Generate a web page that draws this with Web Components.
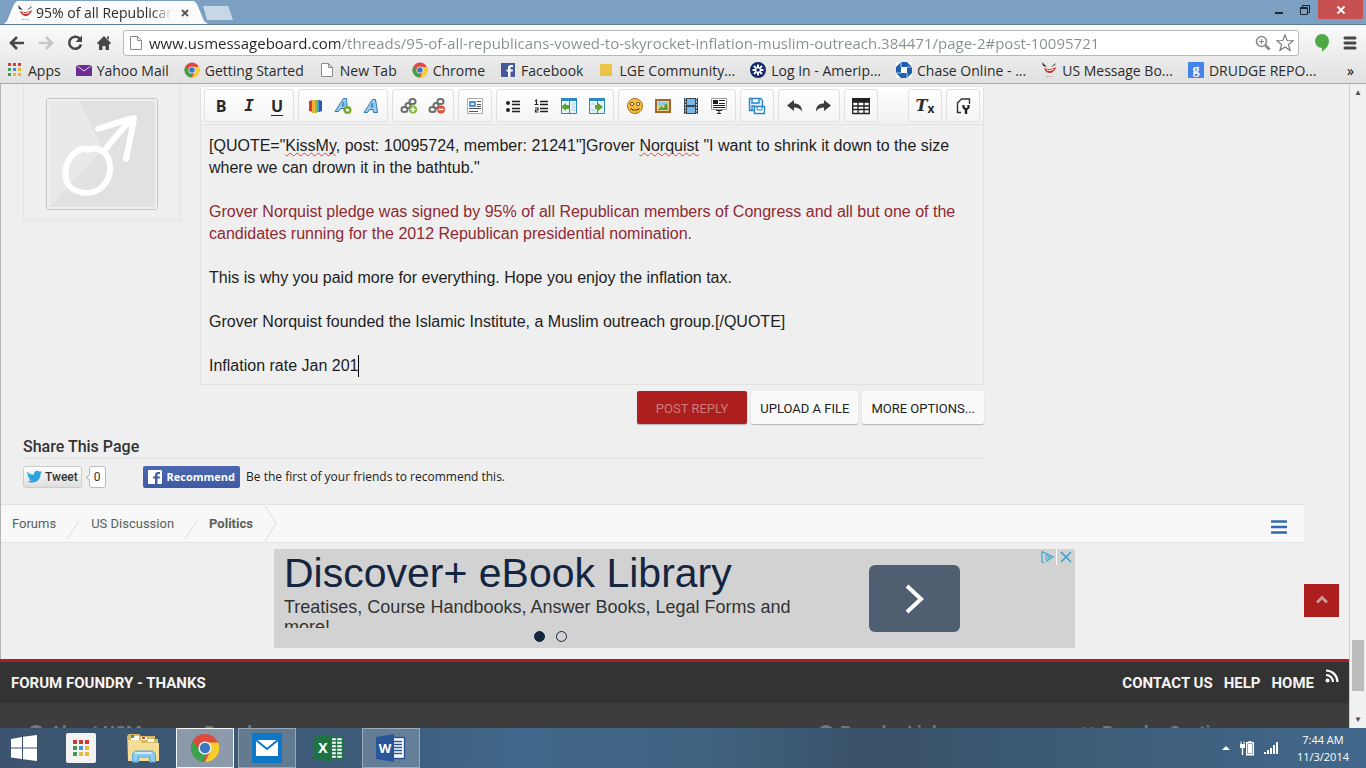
<!DOCTYPE html>
<html lang="en">
<head>
<meta charset="utf-8">
<title>95% of all Republicans vowed to skyrocket inflation</title>
<style>
    html, body {
        height: 100%;
        margin: 0;
    }

    body {
        display: flex;
        flex-direction: column;
        font-family: "Liberation Sans", Arial, sans-serif;
        overflow: hidden;
    }
</style>
</head>
<body>
<browser-chrome>
    <browser-tab slot="tab">95% of all Republicans</browser-tab>
    <book-mark icon="apps">Apps</book-mark>
    <book-mark icon="envelope">Yahoo Mail</book-mark>
    <book-mark icon="chrome">Getting Started</book-mark>
    <book-mark icon="page">New Tab</book-mark>
    <book-mark icon="chrome">Chrome</book-mark>
    <book-mark icon="facebook">Facebook</book-mark>
    <book-mark icon="folder">LGE Community...</book-mark>
    <book-mark icon="ameriprise">Log In - Amerip...</book-mark>
    <book-mark icon="chase">Chase Online - ...</book-mark>
    <book-mark icon="usmb">US Message Bo...</book-mark>
    <book-mark icon="google">DRUDGE REPO...</book-mark>
</browser-chrome>
<page-view>
    <reply-area>
        <user-avatar slot="avatar"></user-avatar>
        <post-editor slot="editor">
            <p>[QUOTE="<u>KissMy</u>, post: 10095724, member: 21241"]Grover <u>Norquist</u> <span>"I want to shrink it down to the size</span> <span>where we can drown it in the bathtub."</span></p>
            <p class="red">Grover Norquist pledge was signed by 95% of all Republican members of Congress and all but one of the candidates running for the 2012 Republican presidential nomination.</p>
            <p>This is why you paid more for everything. Hope you enjoy the inflation tax.</p>
            <p>Grover Norquist founded the Islamic Institute, a Muslim outreach group.[/QUOTE]</p>
            <p class="caret">Inflation rate Jan 201</p>
        </post-editor>
        <share-bar slot="share"></share-bar>
    </reply-area>
    <bread-crumbs></bread-crumbs>
    <text-ad>
        <span slot="title">Discover+ eBook Library</span>
        <span slot="text">Treatises, Course Handbooks, Answer Books, Legal Forms and more!</span>
    </text-ad>
    <page-footer></page-footer>
</page-view>
<task-bar></task-bar>

<script>
// Markup for every small icon, keyed by name.
const ICONS = {
    apps: `<svg viewBox="0 0 16 16">
        <path fill="#d0403a" d="M1 1h3v3H1zM6 1h3v3H6zM11 1h3v3h-3z"/>
        <path fill="#3f9b58" d="M1 6h3v3H1z"/><path fill="#4a86d8" d="M6 6h3v3H6z"/><path fill="#e5b43c" d="M11 6h3v3h-3zM6 11h3v3H6zM11 11h3v3h-3z"/>
        <path fill="#3f9b58" d="M1 11h3v3H1z"/></svg>`,
    envelope: `<svg viewBox="0 0 16 16"><path fill="#6b2c93" d="M0 3h16v11H0z"/><path fill="none" stroke="#e6d5ef" d="M0 3l8 6 8-6"/></svg>`,
    chrome: `<svg viewBox="0 0 32 32">
        <circle cx="16" cy="16" r="15" fill="#dd4b3e"/>
        <path fill="#f6cf2f" d="M16 10h14a15 15 0 0 1-14 21l6-12z"/>
        <path fill="#3da24d" d="M3 8.500l8 11 6 3-3 8.400A15 15 0 0 1 3 8.500z"/>
        <circle cx="16" cy="16" r="7" fill="#f3f3f3"/><circle cx="16" cy="16" r="5.500" fill="#3a78c3"/></svg>`,
    page: `<svg viewBox="0 0 16 16"><path fill="#fdfdfd" stroke="#8a8a8a" d="M2.500 1.500h7l4 4v9h-11zM9.500 1.500v4h4"/></svg>`,
    facebook: `<svg viewBox="0 0 16 16"><path fill="#43599b" d="M1 1h14v14H1z"/><path fill="#fff" d="M8 15V9.500H6.500v-2H8V6c0-2 1.200-3 3-3h2v2h-1.300C11 5 10.500 5.300 10.500 6v1.500H13l-.3 2h-2.200V15z"/></svg>`,
    folder: `<svg viewBox="0 0 16 16"><path fill="#eac545" d="M2 2h12v12H2z"/></svg>`,
    ameriprise: `<svg viewBox="0 0 16 16"><circle cx="8" cy="8" r="8" fill="#14296b"/>
        <path stroke="#fff" stroke-width="2" d="M8 2.500v11M2.500 8h11M4 4l8 8M12 4l-8 8"/><circle cx="8" cy="8" r="1.800" fill="#14296b"/></svg>`,
    chase: `<svg viewBox="0 0 16 16"><path fill="#fff" d="M0 0h16v16H0z"/><path fill="#1c60ae" fill-rule="evenodd" d="M5 0h6l5 5v6l-5 5H5l-5-5V5zM5 5v6h6V5z"/><path stroke="#fff" stroke-width=".700" d="M5 0v5M16 5h-5M11 16v-5M0 11h5"/></svg>`,
    usmb: `<svg viewBox="0 0 16 16"><path fill="#333" d="M1 0l3 3 2 2-4-1zM15 1l-4 3-1 1 4-2z"/><path fill="#c33b32" d="M3 6c4 1.500 7 1.500 12-1-1 4-4 6-6 6s-5-1-6-5z"/>
        <path fill="#fff" d="M5 7c3 1.500 5 1 8-.500l-1 1.500c-2 1-4 1-6 .500z"/><path stroke="#b9a9a2" stroke-dasharray="2 1" d="M5 14.500h7"/></svg>`,
    google: `<svg viewBox="0 0 16 16"><rect width="16" height="16" rx="1" fill="#4583ea"/><text x="8" y="12" fill="#fff" font-family="Liberation Serif, serif" font-weight="bold" font-size="14" text-anchor="middle">g</text></svg>`,
    back: `<svg viewBox="0 0 16 16"><path fill="none" stroke="#474747" stroke-width="2.600" d="M15 8H2M8 2L2 8l6 6"/></svg>`,
    forward: `<svg viewBox="0 0 16 16"><path fill="none" stroke="#c6c6c6" stroke-width="2.600" d="M1 8h13M8 2l6 6-6 6"/></svg>`,
    reload: `<svg viewBox="0 0 16 16"><path fill="none" stroke="#474747" stroke-width="2.600" d="M12.500 3.500a6 6 0 1 0 1.500 6"/><path fill="#474747" d="M15 .500v6.500H8.500z"/></svg>`,
    home: `<svg viewBox="0 0 16 16"><path fill="#474747" d="M8 1l7 7-1 1.500-1-1V15h-3.500v-4h-3v4H3V8.500l-1 1L1 8zM11 1.500h2V5l-2-2z"/></svg>`,
    zoom: `<svg viewBox="0 0 16 16"><circle cx="6.500" cy="6.500" r="5" fill="none" stroke="#8a8a8a" stroke-width="1.600"/><path stroke="#8a8a8a" d="M4 6.500h5M6.500 4v5"/><path stroke="#8a8a8a" stroke-width="3" d="M10.500 10.500l4 4"/></svg>`,
    star: `<svg viewBox="0 0 16 16"><path fill="#fff" stroke="#777" d="M8 .800l1.900 5 5.400.200-4.300 3.300 1.500 5.200L8 11.500l-4.500 3 1.500-5.200L.700 6l5.400-.200z"/></svg>`,
    hangouts: `<svg viewBox="0 0 16 18"><path fill="#4fa846" d="M8 0a7 7 0 0 1 7 7c0 5-4 8-7 11v-4A7 7 0 0 1 8 0z"/></svg>`,
    menu: `<svg viewBox="0 0 14 14"><path stroke="#474747" stroke-width="3" stroke-linecap="round" d="M2 2h10M2 7h10M2 12h10"/></svg>`,
    minimize: `<svg viewBox="0 0 12 12"><path stroke="#1b2630" stroke-width="2" d="M2 9h8"/></svg>`,
    restore: `<svg viewBox="0 0 12 12"><path fill="none" stroke="#1b2630" d="M1.500 3.500h7v7h-7zM1.500 4.500h7M3.500 3V1.500h7v7H9"/></svg>`,
    close: `<svg viewBox="0 0 12 12"><path stroke="#fff" stroke-width="1.800" d="M2.500 2.500l7 7M9.500 2.500l-7 7"/></svg>`,
    tabclose: `<svg viewBox="0 0 12 12"><path stroke="#555" stroke-width="1.800" d="M3 3l6 6M9 3L3 9"/></svg>`,

    // Editor toolbar
    color: `<svg viewBox="0 0 18 18"><path fill="#d53a2e" d="M3 4l4-1v12l-4-1z"/><path fill="#efb136" d="M6 3h3v13H6z"/><path fill="#8bc34a" d="M9 3h2v13H9z"/><path fill="#4a9fdd" d="M11 3h2v12h-2z"/><path fill="#3257a8" d="M13 3l3 1v10l-3 1z"/></svg>`,
    fontsize: `<svg viewBox="0 0 18 18"><path fill="#9cd0f2" stroke="#2f75b8" d="M1 14.500L9.500 1.500h3l1 13h-3l-.500-3H6.500l-2 3zM8 9h2l-.300-4z"/><circle cx="13.500" cy="13" r="2.800" fill="#fff" stroke="#7aab2c" stroke-width="2.400"/></svg>`,
    fontface: `<svg viewBox="0 0 18 18"><path fill="#9cd0f2" stroke="#2f75b8" d="M2 15.500L10.500 2.500h3l2 13h-4l-.500-3H7.500l-2 3zM9 10h2l-.500-4z"/></svg>`,
    link: `<svg viewBox="0 0 18 18"><g fill="none" stroke="#6f6f6f" stroke-width="2"><rect x="1.500" y="10" width="6" height="5" rx="2.500"/><rect x="5.500" y="6" width="5" height="5" rx="2.500"/><rect x="9.500" y="2" width="6" height="5" rx="2.500"/></g><circle cx="13" cy="12.500" r="4" fill="#7db338"/><path stroke="#fff" stroke-width="1.600" d="M10.500 12.500h5M13 10v5"/></svg>`,
    unlink: `<svg viewBox="0 0 18 18"><g fill="none" stroke="#6f6f6f" stroke-width="2"><rect x="1.500" y="10" width="6" height="5" rx="2.500"/><rect x="5.500" y="6" width="5" height="5" rx="2.500"/><rect x="9.500" y="2" width="6" height="5" rx="2.500"/></g><circle cx="13" cy="12.500" r="4" fill="#dc5138"/><path stroke="#fff" stroke-width="1.600" d="M10.500 12.500h5"/></svg>`,
    align: `<svg viewBox="0 0 18 18"><path fill="#fff" stroke="#a9a9a9" d="M1.500 1.500h15v15h-15z"/><path fill="#d8ebfa" stroke="#2b6fb5" stroke-width="1.400" d="M4 5h5v4H4z"/><path stroke="#555" d="M11 4.500h4M11 7.500h4M11 9.500h4M3 11.500h12M3 14.500h9"/></svg>`,
    bullets: `<svg viewBox="0 0 18 18"><circle cx="4" cy="6" r="2" fill="#222"/><circle cx="4" cy="13" r="2" fill="#222"/><path stroke="#222" stroke-width="1.400" d="M8 4.500h8M8 7.500h8M8 11.500h8M8 14.500h8"/></svg>`,
    numbers: `<svg viewBox="0 0 18 18"><path fill="none" stroke="#222" stroke-width="1.200" d="M3 4l1.500-1v4.500M2.500 7.500h4M3 11h3v2H3.500v2h3"/><path stroke="#222" stroke-width="1.400" d="M8 4.500h8M8 7.500h8M8 11.500h8M8 14.500h8"/></svg>`,
    outdent: `<svg viewBox="0 0 18 18"><path fill="#e8f4fb" stroke="#2b8ac4" d="M1.500 1.500h15v15h-15z"/><path fill="#2b8ac4" d="M1 1h16v3H1zM9 4h1v12H9z"/><path fill="#5fa22e" d="M1 10l5-4v2h3v4H6v2z"/><path stroke="#9cc8e4" d="M11.500 7h4M11.500 10h4M11.500 13h4"/></svg>`,
    indent: `<svg viewBox="0 0 18 18"><path fill="#e8f4fb" stroke="#2b8ac4" d="M1.500 1.500h15v15h-15z"/><path fill="#2b8ac4" d="M1 1h16v3H1zM9 4h1v12H9z"/><path fill="#5fa22e" d="M15 10l-5-4v2H7v4h3v2z"/><path stroke="#9cc8e4" d="M3 7h4M3 13h4"/></svg>`,
    smiley: `<svg viewBox="0 0 18 18"><circle cx="9" cy="9" r="7.500" fill="#f6bd3a" stroke="#a8701a"/><circle cx="6" cy="7" r="1.600" fill="#fff" stroke="#6b430c"/><circle cx="12" cy="7" r="1.600" fill="#fff" stroke="#6b430c"/><path fill="none" stroke="#7a4b0d" stroke-width="1.200" d="M4.500 11.500q4.500 3.500 9 0"/></svg>`,
    image: `<svg viewBox="0 0 18 18"><path fill="#e6d68d" stroke="#a5652a" stroke-width="2" d="M2 3h14v12H2z"/><path fill="#8ccbe8" d="M4 5h10v4H4z"/><path fill="#5b9e3a" d="M4 13l3-4 3 2 1-4h2l1 6z"/></svg>`,
    media: `<svg viewBox="0 0 18 18"><path fill="#3d4750" d="M2 1h14v16H2z"/><path fill="#77b7ea" d="M5 2h8v6H5zM5 10h8v6H5z"/><path stroke="#dfe6ea" stroke-dasharray="1.500 1.500" d="M3.500 1v16M14.500 1v16"/></svg>`,
    insert: `<svg viewBox="0 0 18 18"><path fill="#fff" stroke="#999" d="M1.500 1.500h15v11h-15z"/><path fill="#222" d="M3 3h5v4H3z"/><path stroke="#222" d="M9 3.500h6M9 6.500h6M3 8.500h12M3 10.500h12M6 13.500h6M9 13v4M7 16.500h4"/></svg>`,
    drafts: `<svg viewBox="0 0 18 18"><path fill="#dff0fb" stroke="#2b86c6" stroke-width="1.400" d="M1.500 1.500h11l2 2v10h-13zM4 2v4h7V2M4 13V9h3"/><path fill="#fff" stroke="#2b86c6" stroke-width="1.400" d="M6.500 9.500h10v7h-10z"/><path fill="none" stroke="#2b86c6" d="M9 10v3h5v-3"/></svg>`,
    undo: `<svg viewBox="0 0 18 18"><path fill="#3c3c3c" d="M1 8.500L8 3v3.500c5 0 8 2.500 8 8-2-3-4-4-8-4V14z"/></svg>`,
    redo: `<svg viewBox="0 0 18 18"><path fill="#3c3c3c" d="M17 8.500L10 3v3.500c-5 0-8 2.500-8 8 2-3 4-4 8-4V14z"/></svg>`,
    table: `<svg viewBox="0 0 18 18"><path fill="#222" d="M0 1h18v4H0z"/><path fill="#fff" stroke="#222" stroke-width="1.300" d="M.700 5h16.600v11.500H.700zM.700 9h16.600M.700 12.500h16.600M6 5v11M12 5v11"/></svg>`,
    source: `<svg viewBox="0 0 18 18"><path fill="none" stroke="#333" stroke-width="1.400" d="M7 15.500H3.500V6l4-4h8v5"/><path fill="none" stroke="#222" stroke-width="2.200" d="M9.500 8v2.500l2.500 2 2.500-2V8"/><path stroke="#222" stroke-width="2.400" d="M12 12v5"/></svg>`,

    // Page
    bars: `<svg viewBox="0 0 16 14"><path stroke="#3169ac" stroke-width="2.600" stroke-linecap="round" d="M1 1.500h14M1 7h14M1 12.500h14"/></svg>`,
    bird: `<svg viewBox="0 0 16 14"><path fill="#27a5dd" d="M0 2c2 2.200 4.500 3 7.500 3.200C7 3 8.500.800 11 .800c1 0 1.800.400 2.400 1L15.500 1l-1 1.800L16 2.500l-1.500 1.800C14.500 9.500 11 13.500 5.500 13.500 3.500 13.500 1.500 13 .500 12c1.800.200 3-.300 4.200-1.200-1.500 0-2.600-1-3-2.200h1.400C1.500 8 .600 6.700.600 5.300l1.400.400C.600 4.700-.300 3.500 0 2z"/></svg>`,
    fbwhite: `<svg viewBox="0 0 14 14"><rect width="14" height="14" rx="1" fill="#fff"/><path fill="#4460a8" d="M7 14V8.500H5v-2h2V5c0-2 1.200-3 3-3h2v2h-1.300C10 4 9.500 4.300 9.500 5v1.500H12l-.300 2H9.500V14z"/></svg>`,
    up: `<svg viewBox="0 0 14 14"><path fill="none" stroke="#c99a9a" stroke-width="2.800" d="M2 8.500l5-5 5 5"/></svg>`,
    next: `<svg viewBox="0 0 20 30"><path fill="none" stroke="#fff" stroke-width="4" d="M2 2l14 13L2 28"/></svg>`,
    adchoices: `<svg viewBox="0 0 14 14"><path fill="none" stroke="#35a5cf" stroke-width="1.200" d="M4 12.500l-2-.500V1.500L13 7l-7 4.500"/><path fill="none" stroke="#35a5cf" d="M6 10V5l4 2-3 1.500"/></svg>`,
    adclose: `<svg viewBox="0 0 14 14"><path stroke="#35a5cf" stroke-width="1.600" d="M2 2l10 10M12 2L2 12"/></svg>`,
    rss: `<svg viewBox="0 0 14 14"><circle cx="2.500" cy="11.500" r="2" fill="#fff"/><path fill="none" stroke="#fff" stroke-width="2.200" d="M1 6a7 7 0 0 1 7 7M1 1.500A11.500 11.500 0 0 1 12.500 13"/></svg>`,
    info: `<svg viewBox="0 0 14 14"><circle cx="7" cy="7" r="7" fill="#777"/><path fill="#3d3d3d" d="M5 4h4v3H5z"/></svg>`,
    heart: `<svg viewBox="0 0 18 14"><path fill="#777" d="M9 14L1 6C-1 2 3-2 9 3c6-5 10-1 8 3z"/></svg>`,

    // Task bar
    windows: `<svg viewBox="0 0 26 26"><path fill="#fff" d="M0 4l11-2v10.500H0zM12 1.800L26 0v12.500H12zM0 13.500h11V24L0 22.500zM12 13.500h14V26l-14-1.800z"/></svg>`,
    launcher: `<svg viewBox="0 0 30 30"><rect width="30" height="30" rx="2" fill="#f3f3f3"/><path fill="#cf3a35" d="M7 7h4v4H7zM13 7h4v4h-4zM19 7h4v4h-4z"/><path fill="#3f9b58" d="M7 13h4v4H7zM7 19h4v4H7z"/><path fill="#4a8fd8" d="M13 13h4v4h-4z"/><path fill="#e8b93c" d="M19 13h4v4h-4zM13 19h4v4h-4zM19 19h4v4h-4z"/></svg>`,
    explorer: `<svg viewBox="0 0 32 30"><path fill="#d9b962" d="M0 3l2-2h10l2 2h14v3h3v22H1z"/><path fill="#fff" d="M4 3h8v4H4zM14 4h6v3h-6zM21 6h6v3h-6z"/><path fill="#3f9b58" d="M4 2h3v3H4z"/><path fill="#d5463a" d="M15 4h3v2h-3z"/><path fill="#f4dd94" d="M1 7h12l2 3h17v18H1z"/>
        <path fill="#8ccbf0" stroke="#5aa5d6" d="M5.500 29v-8l3-3h17l3 3v8h-6v-5h-11v5z"/><path fill="#cfeafa" d="M8 19h17v2H8z"/></svg>`,
    mail: `<svg viewBox="0 0 30 30"><path fill="#0d78c8" d="M0 0h30v30H0z"/><path fill="#fff" d="M4 7h22v16H4z"/><path fill="none" stroke="#0d78c8" stroke-width="2" d="M4 7l11 9 11-9"/></svg>`,
    excel: `<svg viewBox="0 0 30 28"><path fill="#fff" stroke="#1f7244" stroke-width="1.400" d="M16 3.500h12.500v21H16z"/><path stroke="#1f7244" stroke-width="1.400" d="M17 7h11M17 10.500h11M17 14h11M17 17.500h11M17 21h11M22.500 4v20"/><path fill="#1f7244" d="M0 3l18-3v28L0 25z"/><text x="9" y="19" fill="#fff" font-family="Open Sans, sans-serif" font-weight="bold" font-size="14" text-anchor="middle">X</text></svg>`,
    word: `<svg viewBox="0 0 30 28"><path fill="#fff" stroke="#2a5699" stroke-width="1.400" d="M16 3.500h12.500v21H16z"/><path stroke="#2a5699" stroke-width="1.400" d="M18 7.500h8M18 10.500h8M18 13.500h8M18 16.500h8M18 19.500h8"/><path fill="#2a5699" d="M0 3l18-3v28L0 25z"/><text x="9" y="19" fill="#fff" font-family="Open Sans, sans-serif" font-weight="bold" font-size="13" text-anchor="middle">W</text></svg>`,
    trayup: `<svg viewBox="0 0 8 8"><path fill="#fff" d="M0 6l4-4 4 4z"/></svg>`,
    battery: `<svg viewBox="0 0 16 16"><path fill="none" stroke="#fff" stroke-width="1.400" d="M7.700 2.700h6.600v12H7.700z"/><path fill="#fff" d="M9 4h4v9.500H9zM9.500 1h3v1h-3zM1 4h5v4H4.200v7H2.800V8H1zM1.500 1.500h1V4h-1zM4.500 1.500h1V4h-1z"/></svg>`,
    signal: `<svg viewBox="0 0 16 14"><path fill="#fff" d="M0 11h2v2H0zM3 9h2v4H3zM6 7h2v6H6zM9 4h2v9H9zM12 1h2v12h-2z"/></svg>`
};

class UiIcon extends HTMLElement {
    constructor() {
        super();
        this.root = this.attachShadow({ mode: 'open' });
    }

    connectedCallback() {
        this.root.innerHTML = `
<style>
    :host {
        display: inline-block;
        flex: none;
        height: var(--icon-h, 16px);
        width: var(--icon-w, 16px);
    }

    svg {
        display: block;
        height: 100%;
        width: 100%;
    }
</style>
${ICONS[this.getAttribute("name")]}`;
        this.root.querySelector("svg").setAttribute("aria-hidden", "true");
    }
}

customElements.define('ui-icon', UiIcon);

class BrowserTab extends HTMLElement {
    constructor() {
        super();
        let template = document.createElement("template");
        template.innerHTML = `
<style>
    :host {
        align-items: center;
        background-color: #fbfbfb;
        box-sizing: border-box;
        clip-path: polygon(0 100%, 3px 20px, 10px 3px, 13px 0, 190px 0, 193px 3px, 200px 20px, 204px 100%);
        color: #2a2a2a;
        display: flex;
        font-size: 14px;
        gap: 3px;
        height: 23px;
        padding: 0 17px 0 13px;
        width: 204px;
    }

    .title {
        flex: 1;
        -webkit-mask-image: linear-gradient(to right, #000 85%, transparent);
        overflow: hidden;
        white-space: nowrap;
    }

    button {
        background: none;
        border: none;
        display: flex;
        --icon-h: 12px;
        --icon-w: 12px;
        padding: 0 0 0 4px;
    }
</style>
<ui-icon name="usmb"></ui-icon>
<span class="title"><slot></slot></span>
<button aria-label="Close tab"><ui-icon name="tabclose"></ui-icon></button>`;
        this.root = this.attachShadow({ mode: 'open' });
        this.root.appendChild(template.content.cloneNode(true));
    }
}

customElements.define('browser-tab', BrowserTab);

class BookMark extends HTMLElement {
    constructor() {
        super();
        this.root = this.attachShadow({ mode: 'open' });
    }

    connectedCallback() {
        this.root.innerHTML = `
<style>
    :host {
        display: block;
    }

    a {
        align-items: center;
        color: #2b2b2b;
        display: flex;
        gap: 5px;
        text-decoration: none;
        white-space: nowrap;
    }
</style>
<a href="#"><ui-icon name="${this.getAttribute("icon")}"></ui-icon><slot></slot></a>`;
    }
}

customElements.define('book-mark', BookMark);

class BrowserChrome extends HTMLElement {
    constructor() {
        super();
        let template = document.createElement("template");
        template.innerHTML = `
<style>
    :host {
        display: block;
        flex: none;
        font-family: "Open Sans", "Noto Sans", sans-serif;
    }

    button {
        background: none;
        border: none;
        display: flex;
        padding: 0;
    }

    .strip {
        align-items: flex-end;
        background-color: #7ba0c2;
        border-bottom: 1px solid #5f7e9a;
        display: flex;
        height: 24px;
        padding-left: 4px;
    }

    .newtab {
        background-color: #c6d8e5;
        clip-path: polygon(0 0, 84% 0, 100% 100%, 14% 100%);
        height: 14px;
        margin: 0 0 4px -5px;
        width: 30px;
    }

    .window {
        align-self: flex-start;
        display: flex;
        --icon-h: 12px;
        --icon-w: 12px;
        margin-left: auto;
        padding-right: 3px;
    }

    .window button {
        align-items: center;
        height: 19px;
        justify-content: center;
        width: 26px;
    }

    .window .close {
        background-color: #c75050;
        width: 45px;
    }

    .bars {
        background: linear-gradient(#fbfbfb, #e0e0e0);
        border-bottom: 1px solid #aaa;
    }

    .nav {
        align-items: center;
        display: flex;
        gap: 13px;
        height: 25px;
        padding: 5px 9px 2px 9px;
    }

    .omnibox {
        align-items: center;
        background-color: white;
        border: 1px solid #b8b8b8;
        border-radius: 3px;
        box-sizing: border-box;
        display: flex;
        flex: 1;
        gap: 5px;
        height: 26px;
        margin: 0 -2px;
        padding: 0 4px;
    }

    .omnibox + button {
        margin-left: 4px;
    }

    /* Host name is drawn darker than the path. */
    input {
        background: linear-gradient(to right, #262626 var(--host-w), #85908a var(--host-w)) text;
        border: none;
        color: #85908a;
        flex: 1;
        font: inherit;
        font-size: 15px;
        --host-w: 191px;
        outline: none;
        padding: 0;
        -webkit-text-fill-color: transparent;
    }

    .bookmarks {
        align-items: center;
        display: flex;
        font-size: 14px;
        gap: 15px;
        height: 26px;
        padding: 0 12px 0 7px;
    }

    .more {
        margin-left: auto;
    }
</style>
<div class="strip">
    <slot name="tab"></slot>
    <button class="newtab" aria-label="New tab"></button>
    <div class="window">
        <button aria-label="Minimize"><ui-icon name="minimize"></ui-icon></button>
        <button aria-label="Restore"><ui-icon name="restore"></ui-icon></button>
        <button class="close" aria-label="Close"><ui-icon name="close"></ui-icon></button>
    </div>
</div>
<div class="bars">
    <div class="nav">
        <button aria-label="Back"><ui-icon name="back"></ui-icon></button>
        <button aria-label="Forward"><ui-icon name="forward"></ui-icon></button>
        <button aria-label="Reload"><ui-icon name="reload"></ui-icon></button>
        <button aria-label="Home"><ui-icon name="home"></ui-icon></button>
        <div class="omnibox">
            <ui-icon name="page"></ui-icon>
            <input type="text" aria-label="Address" value="www.usmessageboard.com/threads/95-of-all-republicans-vowed-to-skyrocket-inflation-muslim-outreach.384471/page-2#post-10095721">
            <button aria-label="Zoom"><ui-icon name="zoom"></ui-icon></button>
            <button aria-label="Bookmark this page"><ui-icon name="star" style="--icon-w: 18px; --icon-h: 18px"></ui-icon></button>
        </div>
        <button aria-label="Hangouts"><ui-icon name="hangouts" style="--icon-h: 18px"></ui-icon></button>
        <button aria-label="Menu"><ui-icon name="menu" style="--icon-w: 14px; --icon-h: 14px"></ui-icon></button>
    </div>
    <div class="bookmarks">
        <slot></slot>
        <span class="more">»</span>
    </div>
</div>`;
        this.root = this.attachShadow({ mode: 'open' });
        this.root.appendChild(template.content.cloneNode(true));
    }
}

customElements.define('browser-chrome', BrowserChrome);

class PageView extends HTMLElement {
    constructor() {
        super();
        let template = document.createElement("template");
        template.innerHTML = `
<style>
    :host {
        background-color: #efefef;
        display: flex;
        flex: 1;
        min-height: 0;
        position: relative;
    }

    .page {
        box-shadow: inset 1px 0 #b5b5b5;
        flex: 1;
        min-width: 0;
        overflow: hidden;
    }

    .top {
        align-items: center;
        background-color: #ad1f1f;
        border: none;
        bottom: 111px;
        display: flex;
        height: 33px;
        --icon-h: 14px;
        --icon-w: 14px;
        justify-content: center;
        padding: 0;
        position: absolute;
        right: 27px;
        width: 35px;
    }

    .scrollbar {
        background-color: #f1f1f1;
        border-left: 1px solid #cfcfcf;
        display: flex;
        flex-direction: column;
        width: 16px;
    }

    .scrollbar button {
        background: none;
        border: none;
        color: #505050;
        font-size: 8px;
        height: 17px;
        line-height: 17px;
        padding: 0;
    }

    .above {
        flex: 538;
    }

    .thumb {
        background-color: #bcbcbc;
        flex: 51;
        margin: 0 2px;
    }

    .below {
        flex: 20;
    }
</style>
<div class="page"><slot></slot></div>
<div class="scrollbar">
    <button aria-label="Scroll up">▲</button>
    <div class="above"></div>
    <div class="thumb"></div>
    <div class="below"></div>
    <button aria-label="Scroll down">▼</button>
</div>
<button class="top" aria-label="Top of page"><ui-icon name="up"></ui-icon></button>`;
        this.root = this.attachShadow({ mode: 'open' });
        this.root.appendChild(template.content.cloneNode(true));
    }
}

customElements.define('page-view', PageView);

class ReplyArea extends HTMLElement {
    constructor() {
        super();
        let template = document.createElement("template");
        template.innerHTML = `
<style>
    :host {
        display: block;
        font-family: Roboto, sans-serif;
        padding: 0 365px 0 23px;
    }

    .compose {
        align-items: flex-start;
        display: flex;
        gap: 19px;
    }

    .compose > div {
        flex: 1;
        min-width: 0;
    }

    .buttons {
        display: flex;
        gap: 4px;
        justify-content: flex-end;
        padding: 6px 0 12px;
    }

    button {
        background-color: #fafafa;
        border: none;
        border-radius: 2px;
        box-shadow: 0 1px 1px #b5b5b5;
        color: #222;
        font-family: inherit;
        font-size: 13px;
        height: 33px;
        padding: 2px 9px 0;
    }

    .primary {
        background-color: #ad1f1f;
        color: #cc7c78;
        padding: 2px 19px 0;
    }
</style>
<div class="compose">
    <slot name="avatar"></slot>
    <div>
        <slot name="editor"></slot>
        <div class="buttons">
            <button class="primary">POST REPLY</button>
            <button>UPLOAD A FILE</button>
            <button>MORE OPTIONS...</button>
        </div>
    </div>
</div>
<slot name="share"></slot>`;
        this.root = this.attachShadow({ mode: 'open' });
        this.root.appendChild(template.content.cloneNode(true));
    }
}

customElements.define('reply-area', ReplyArea);

class UserAvatar extends HTMLElement {
    constructor() {
        super();
        let template = document.createElement("template");
        template.innerHTML = `
<style>
    :host {
        border: 1px solid #e4e4e4;
        border-top: none;
        display: flex;
        flex: none;
        justify-content: center;
        padding: 14px 22px 10px;
    }

    svg {
        border: 1px solid #c6c6c6;
        border-radius: 3px;
        height: 110px;
        width: 110px;
    }
</style>
<svg viewBox="0 0 110 110" role="img" aria-label="Member avatar">
    <path fill="#efefef" d="M0 0h110v110H0z"/>
    <path fill="#e1e1e1" d="M2 2h106v106H2z"/>
    <path fill="#e8e9ea" d="M2 2h30l24 48L2 108z"/>
    <path fill="none" stroke="#fff" stroke-width="6" stroke-linecap="round" stroke-linejoin="round" d="M41 50c-14-2-25 14-22 30 3 15 26 18 36 8 12-11 10-32-2-37-4-2-8-2-13 0M57 52c8-10 18-22 27-31M51 30c12-4 24-8 36-11-2 13-5 27-8 41"/>
</svg>`;
        this.root = this.attachShadow({ mode: 'open' });
        this.root.appendChild(template.content.cloneNode(true));
    }
}

customElements.define('user-avatar', UserAvatar);

// Toolbar groups, left to right. [icon or letter, label]
const TOOLS = [
    [["B", "Bold"], ["I", "Italic"], ["U", "Underline"]],
    [["color", "Text color"], ["fontsize", "Font size"], ["fontface", "Font family"]],
    [["link", "Link"], ["unlink", "Unlink"]],
    [["align", "Alignment"]],
    [["bullets", "Unordered list"], ["numbers", "Ordered list"], ["outdent", "Outdent"], ["indent", "Indent"]],
    [["smiley", "Smilies"], ["image", "Image"], ["media", "Media"], ["insert", "Insert"]],
    [["drafts", "Drafts"]],
    [["undo", "Undo"], ["redo", "Redo"]],
    [["table", "Table"]],
    [["T", "Remove formatting"]],
    [["source", "Toggle editor"]]
];

class PostEditor extends HTMLElement {
    constructor() {
        super();
        let groups = TOOLS.map(group => `<div class="group">` + group.map(([name, label]) =>
            ICONS[name]
                ? `<button aria-label="${label}"><ui-icon name="${name}"></ui-icon></button>`
                : `<button aria-label="${label}" class="${name}">${name}${name == "T" ? "<sub>x</sub>" : ""}</button>`
        ).join("") + `</div>`).join("");

        let template = document.createElement("template");
        template.innerHTML = `
<style>
    :host {
        border: 1px solid #e2e2e2;
        display: block;
        font-family: "Liberation Sans", Arial, sans-serif;
        margin-top: 2px;
    }

    .toolbar {
        background: linear-gradient(#fff, #f0f0f0);
        border-bottom: 1px solid #e4e4e4;
        display: flex;
        gap: 4px;
        --icon-h: 18px;
        --icon-w: 18px;
        padding: 2px 3px;
    }

    .group {
        background: linear-gradient(#fff, #f4f4f4);
        border: 1px solid #e0e0e0;
        border-radius: 3px;
        display: flex;
        padding: 0 2px;
    }

    .group:nth-last-child(2) {
        margin-left: auto;
    }

    button {
        align-items: center;
        background: none;
        border: none;
        color: #2a2a2a;
        display: flex;
        font-family: "Open Sans", sans-serif;
        font-size: 16px;
        font-weight: bold;
        height: 31px;
        justify-content: center;
        padding: 0;
        width: 28px;
    }

    .I {
        font-family: "DejaVu Sans Mono", monospace;
        font-style: italic;
    }

    .U {
        text-decoration: underline;
        text-underline-offset: 3px;
    }

    .T {
        font-family: "DejaVu Serif", serif;
        font-style: italic;
    }

    sub {
        font-family: "Open Sans", sans-serif;
        font-size: 12px;
        font-style: normal;
        line-height: 1;
        padding-top: 6px;
    }

    .text {
        color: #1d1d1d;
        font-size: 16px;
        line-height: 22px;
        outline: none;
        padding: 10px 8px 7px;
    }

    ::slotted(p) {
        margin: 0 0 22px;
    }

    ::slotted(p:last-child) {
        margin: 0;
    }

    ::slotted(.red) {
        color: #8e2a33;
    }

    ::slotted(.caret) {
        border-right: 1px solid black;
        width: fit-content;
    }
</style>
<div class="toolbar" role="toolbar">${groups}</div>
<div class="text" role="textbox" aria-multiline="true" aria-label="Reply" contenteditable="true" spellcheck="false"><slot></slot></div>`;
        this.root = this.attachShadow({ mode: 'open' });
        this.root.appendChild(template.content.cloneNode(true));
    }

    connectedCallback() {
        // Misspelled words are nested too deep for ::slotted.
        this.querySelectorAll("u").forEach(word => {
            word.style.textDecoration = "underline wavy #e0483c 1px";
            word.style.textDecorationSkipInk = "none";
        });
    }
}

customElements.define('post-editor', PostEditor);

class ShareBar extends HTMLElement {
    constructor() {
        super();
        let template = document.createElement("template");
        template.innerHTML = `
<style>
    :host {
        display: block;
        padding-bottom: 16px;
    }

    h3 {
        border-bottom: 1px solid #e0e0e0;
        color: #333;
        font-size: 16px;
        font-weight: 500;
        line-height: 22px;
        margin: 0 0 6px;
    }

    .row {
        align-items: center;
        display: flex;
        height: 23px;
    }

    button {
        align-items: center;
        border-radius: 3px;
        box-sizing: border-box;
        display: flex;
        font-family: inherit;
        font-size: 12px;
        gap: 3px;
        height: 22px;
        padding: 0 3px;
    }

    .tweet {
        background: linear-gradient(#fff, #dedede);
        border: 1px solid #ccc;
        color: #333;
        font-weight: 500;
        --icon-h: 13px;
        --icon-w: 15px;
    }

    .count {
        background-color: white;
        border: 1px solid #bbb;
        border-radius: 3px;
        color: #333;
        font-size: 12px;
        line-height: 20px;
        margin: 0 37px 0 7px;
        padding: 0 4px;
        position: relative;
    }

    .count::before {
        background-color: white;
        border: 1px solid #bbb;
        border-right: none;
        border-top: none;
        content: "";
        height: 4px;
        left: -3px;
        position: absolute;
        top: 8px;
        transform: rotate(45deg);
        width: 4px;
    }

    .recommend {
        background: linear-gradient(#4a67b0, #3f5aa3);
        border: none;
        border-radius: 2px;
        color: white;
        font-family: "Open Sans", sans-serif;
        font-size: 11px;
        font-weight: bold;
        gap: 5px;
        --icon-h: 14px;
        --icon-w: 14px;
        padding: 0 5px;
    }

    .note {
        color: #222;
        font-family: "Open Sans", sans-serif;
        font-size: 12px;
        margin-left: 6px;
    }
</style>
<h3>Share This Page</h3>
<div class="row">
    <button class="tweet"><ui-icon name="bird"></ui-icon>Tweet</button>
    <span class="count">0</span>
    <button class="recommend"><ui-icon name="fbwhite"></ui-icon>Recommend</button>
    <span class="note">Be the first of your friends to recommend this.</span>
</div>`;
        this.root = this.attachShadow({ mode: 'open' });
        this.root.appendChild(template.content.cloneNode(true));
    }
}

customElements.define('share-bar', ShareBar);

class BreadCrumbs extends HTMLElement {
    constructor() {
        super();
        let template = document.createElement("template");
        template.innerHTML = `
<style>
    :host {
        align-items: center;
        background-color: #f8f8f8;
        border: 1px solid #e4e4e4;
        border-left: none;
        border-right: none;
        display: flex;
        font-family: Roboto, sans-serif;
        font-size: 13px;
        height: 37px;
        justify-content: space-between;
        margin: 0 45px 0 1px;
        padding: 0 17px 0 11px;
    }

    nav {
        align-items: center;
        display: flex;
        gap: 11px;
    }

    a {
        color: #57605a;
        text-decoration: none;
    }

    a:last-of-type {
        font-weight: bold;
    }

    svg {
        fill: none;
        height: 37px;
        stroke: #dcdcdc;
        width: 13px;
    }

    button {
        background: none;
        border: none;
        display: flex;
        --icon-h: 14px;
        padding: 6px 0 0;
    }
</style>
<nav aria-label="Breadcrumb">
    <a href="#">Forums</a>
    <svg viewBox="0 0 13 37"><path d="M0 34L12 16"/></svg>
    <a href="#">US Discussion</a>
    <svg viewBox="0 0 13 37"><path d="M0 34L12 16"/></svg>
    <a href="#">Politics</a>
    <svg viewBox="0 0 13 37"><path d="M1 1L12 18 1 36"/></svg>
</nav>
<button aria-label="Open quick navigation"><ui-icon name="bars"></ui-icon></button>`;
        this.root = this.attachShadow({ mode: 'open' });
        this.root.appendChild(template.content.cloneNode(true));
    }
}

customElements.define('bread-crumbs', BreadCrumbs);

class TextAd extends HTMLElement {
    constructor() {
        super();
        let template = document.createElement("template");
        template.innerHTML = `
<style>
    :host {
        background-color: #d2d2d2;
        box-sizing: border-box;
        display: flex;
        height: 99px;
        justify-content: space-between;
        margin: 6px auto 11px;
        max-width: 801px;
        padding-left: 10px;
        position: relative;
    }

    .copy {
        height: 79px;
        overflow: hidden;
        width: 540px;
    }

    .title {
        color: #14253f;
        display: block;
        font-size: 41px;
        line-height: 48px;
        text-decoration: none;
    }

    .text {
        color: #333;
        font-size: 18px;
        line-height: 20px;
        margin: 0;
    }

    .dots {
        bottom: 6px;
        display: flex;
        gap: 11px;
        left: 260px;
        position: absolute;
    }

    .dots button {
        background: none;
        border: 1px solid #14253f;
        border-radius: 50%;
        height: 11px;
        padding: 0;
        width: 11px;
    }

    .dots .current {
        background-color: #14253f;
    }

    .go {
        align-items: center;
        align-self: center;
        background-color: #4f5f71;
        border-radius: 6px;
        display: flex;
        height: 67px;
        --icon-h: 30px;
        --icon-w: 20px;
        justify-content: center;
        margin-left: auto;
        margin-right: 78px;
        width: 91px;
    }

    .choices {
        display: flex;
        --icon-h: 14px;
        --icon-w: 14px;
        height: 16px;
    }

    .choices button {
        align-items: center;
        background: none;
        border: none;
        display: flex;
        padding: 0 2px;
    }

    .choices button + button {
        border-left: 1px solid white;
    }
</style>
<div class="copy">
    <a class="title" href="#"><slot name="title"></slot></a>
    <p class="text"><slot name="text"></slot></p>
</div>
<div class="dots">
    <button class="current" aria-label="Ad 1"></button>
    <button aria-label="Ad 2"></button>
</div>
<a class="go" href="#" aria-label="Open ad"><ui-icon name="next"></ui-icon></a>
<div class="choices">
    <button aria-label="AdChoices"><ui-icon name="adchoices"></ui-icon></button>
    <button aria-label="Close ad"><ui-icon name="adclose"></ui-icon></button>
</div>`;
        this.root = this.attachShadow({ mode: 'open' });
        this.root.appendChild(template.content.cloneNode(true));
    }
}

customElements.define('text-ad', TextAd);

class PageFooter extends HTMLElement {
    constructor() {
        super();
        let template = document.createElement("template");
        template.innerHTML = `
<style>
    :host {
        background-color: #3d3d3d;
        border-top: 3px solid #ad1f1f;
        display: block;
        font-family: Roboto, sans-serif;
    }

    .legal {
        align-items: center;
        background-color: #333;
        display: flex;
        gap: 11px;
        height: 41px;
        padding: 0 10px 0 11px;
    }

    .legal a {
        color: #f5f5f5;
        font-size: 15px;
        font-weight: bold;
        text-decoration: none;
    }

    .legal a:first-child {
        margin-right: auto;
    }

    .rss {
        align-self: flex-start;
        display: flex;
        --icon-h: 14px;
        --icon-w: 14px;
        padding-top: 7px;
    }

    .columns {
        display: grid;
        grid-template-columns: 790px 262px 1fr;
        padding: 19px 0 20px 28px;
    }

    h3 {
        align-items: center;
        color: #777;
        display: flex;
        font-size: 18px;
        gap: 6px;
        line-height: 22px;
        margin: 0;
    }
</style>
<div class="legal">
    <a href="#">FORUM FOUNDRY - THANKS</a>
    <a href="#">CONTACT US</a>
    <a href="#">HELP</a>
    <a href="#">HOME</a>
    <a class="rss" href="#" aria-label="RSS"><ui-icon name="rss"></ui-icon></a>
</div>
<div class="columns">
    <h3><ui-icon name="info"></ui-icon>About USMessage Board</h3>
    <h3><ui-icon name="info"></ui-icon>Popular Links</h3>
    <h3><ui-icon name="heart"></ui-icon>Popular Section</h3>
</div>`;
        this.root = this.attachShadow({ mode: 'open' });
        this.root.appendChild(template.content.cloneNode(true));
    }
}

customElements.define('page-footer', PageFooter);

class TaskBar extends HTMLElement {
    constructor() {
        super();
        let template = document.createElement("template");
        template.innerHTML = `
<style>
    :host {
        background: linear-gradient(to right, #3c546f, #3d5b78 25%, #41678a 38%, #3f6280 52%, #3a5167 64%, #3c5a74 76%, #42688c);
        display: flex;
        flex: none;
        font-family: "Open Sans", "Noto Sans", sans-serif;
        gap: 4px;
        height: 40px;
    }

    button {
        align-items: center;
        background: none;
        border: 1px solid transparent;
        box-sizing: border-box;
        display: flex;
        --icon-h: 30px;
        --icon-w: 30px;
        justify-content: center;
        padding: 0;
        width: 58px;
    }

    .start {
        --icon-h: 26px;
        --icon-w: 26px;
        width: 48px;
    }

    .open {
        background-color: rgb(255, 255, 255, 0.2);
        border-color: rgb(255, 255, 255, 0.35);
    }

    .active {
        background-color: rgb(255, 255, 255, 0.4);
        border-color: rgb(255, 255, 255, 0.9);
    }

    .tray {
        align-items: center;
        color: white;
        display: flex;
        font-size: 11px;
        gap: 9px;
        line-height: 17px;
        margin-left: auto;
        padding-right: 17px;
        text-align: center;
    }

    .clock {
        margin-left: 8px;
    }
</style>
<button class="start" aria-label="Start"><ui-icon name="windows"></ui-icon></button>
<button aria-label="Chrome App Launcher"><ui-icon name="launcher"></ui-icon></button>
<button aria-label="File Explorer"><ui-icon name="explorer" style="--icon-w: 32px"></ui-icon></button>
<button class="active" aria-label="Google Chrome"><ui-icon name="chrome"></ui-icon></button>
<button class="open" aria-label="Mail"><ui-icon name="mail"></ui-icon></button>
<button aria-label="Excel"><ui-icon name="excel"></ui-icon></button>
<button class="open" aria-label="Word"><ui-icon name="word"></ui-icon></button>
<div class="tray">
    <ui-icon name="trayup" style="--icon-w: 8px; --icon-h: 8px"></ui-icon>
    <ui-icon name="battery"></ui-icon>
    <ui-icon name="signal" style="--icon-h: 14px"></ui-icon>
    <time class="clock">7:44 AM<br>11/3/2014</time>
</div>`;
        this.root = this.attachShadow({ mode: 'open' });
        this.root.appendChild(template.content.cloneNode(true));
    }
}

customElements.define('task-bar', TaskBar);
</script>
</body>
</html>
